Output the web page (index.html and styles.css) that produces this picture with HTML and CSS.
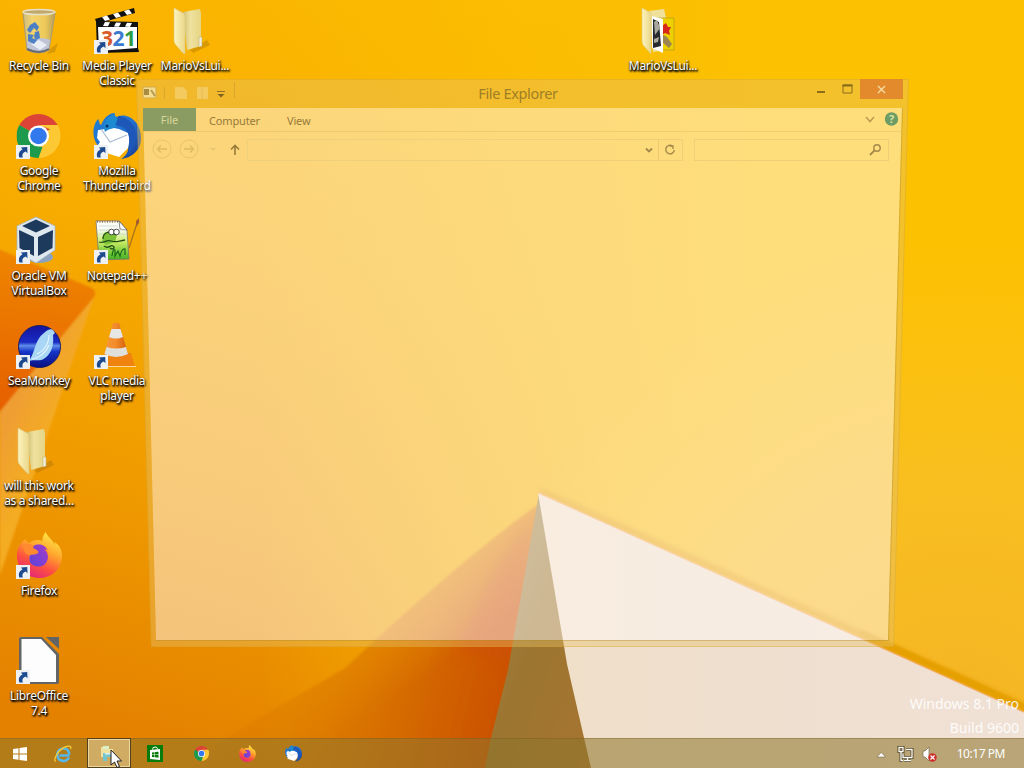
FILE: index.html
```html
<!DOCTYPE html>
<html lang="en">
<head>
<meta charset="utf-8">
<title>Desktop</title>
<link rel="stylesheet" href="styles.css">
</head>
<body>
<svg class="defs" width="0" height="0">
  <defs>
    <linearGradient id="fol" x1="0" x2="1"><stop offset="0" stop-color="#fdf3bd"/><stop offset="1" stop-color="#e9d78a"/></linearGradient>
    <linearGradient id="fol2" x1="0" x2="1"><stop offset="0" stop-color="#d0bf72"/><stop offset=".4" stop-color="#efe1a0"/><stop offset="1" stop-color="#e6d583"/></linearGradient>
    <linearGradient id="ffo" x1=".8" y1="0" x2=".3" y2="1"><stop offset="0" stop-color="#fff04a"/><stop offset=".4" stop-color="#ffa42c"/><stop offset=".7" stop-color="#ff5040"/><stop offset="1" stop-color="#e2257c"/></linearGradient>
    <linearGradient id="ffi" x1="1" y1="0" x2="0" y2="1"><stop offset="0" stop-color="#a83cc8"/><stop offset="1" stop-color="#5a42dc"/></linearGradient>
    <linearGradient id="tb" x1="0" y1="0" x2="1" y2="1"><stop offset="0" stop-color="#1c7fd4"/><stop offset=".5" stop-color="#2471cf"/><stop offset="1" stop-color="#173a92"/></linearGradient>
    <linearGradient id="sea" x1="0" y1="0" x2="0" y2="1"><stop offset="0" stop-color="#14149c"/><stop offset=".4" stop-color="#1a2cc4"/><stop offset=".48" stop-color="#5f8dea"/><stop offset=".62" stop-color="#1535c8"/><stop offset="1" stop-color="#0b0f80"/></linearGradient>
    <linearGradient id="bin" x1="0" x2="1"><stop offset="0" stop-color="#c9bd8c"/><stop offset=".3" stop-color="#f3d77a"/><stop offset=".7" stop-color="#eccb62"/><stop offset="1" stop-color="#ad9a62"/></linearGradient>
    <linearGradient id="npp" x1="0" y1="0" x2="0" y2="1"><stop offset=".2" stop-color="#fbfdf4"/><stop offset=".55" stop-color="#c5ea62"/><stop offset="1" stop-color="#3fae1e"/></linearGradient>
    <linearGradient id="vlc" x1="0" x2="1"><stop offset="0" stop-color="#f59a3c"/><stop offset=".5" stop-color="#f38a2a"/><stop offset="1" stop-color="#cf5c0a"/></linearGradient>
    <symbol id="arrow" viewBox="0 0 14 14"><path d="M0 0h14v14H0z" fill="#eef1f4"/><path d="M3.400 12.500C2 8.500 3.600 5.800 6.500 4.600L5 2.500 11.200 2l.3 6.200-1.800-1.600C6.800 7.800 5.700 9.500 6.800 12.500z" fill="#1d4a8f"/></symbol>
    <symbol id="chrome" viewBox="0 0 44 44"><path d="M22 22 2.950 11A22 22 0 0 1 41.050 11z" fill="#db4437"/><path d="M22 22 41.050 11A22 22 0 0 1 22 44z" fill="#fcc934"/><path d="M22 22V44A22 22 0 0 1 2.950 11z" fill="#1e9a4c"/><path d="M43.200 16 31.500 27.500 22 44C29 38 35 30 34 18z" fill="#fcc934"/><path d="M22 11h19.050A22 22 0 0 1 44 22L33 15z" fill="#fcc934"/><path d="M12.500 27.500 2.950 11C8 18 18 33 26 33L22 44z" fill="#1e9a4c"/><circle cx="22" cy="22" r="10.500" fill="#fff"/><circle cx="22" cy="22" r="8.300" fill="#3179ed"/></symbol>
    <symbol id="firefox" viewBox="0 0 46 46"><path d="M29 0c-2 3-3.500 6-3 9-5-2-10-1-13 2-3-1-4-3-4-4C3 11 0 17 .5 25 1 37 11 46 23 46c13 0 23-10 22.500-23C45 15 41 12 38 10c0 2 .5 3 1 5C37 8 32 6 29 0z" fill="url(#ffo)"/><path d="M6 13c4-3 9-1 11 1 3 1 5-1 8 0 4 1 7 5 7 10 0 6-4 10-10 10S12 29 13 23c-4 0-6-5-7-10z" fill="#ff8a30"/><path d="M17 14c5-3 12-1 14 4-1-.5-2-1-3-.5 6 5 4 16-5 17-7 .5-11-4-10-10 1-3 4-1 8-3 1-1 1-2 0-3-2-2-5-1-4-4.500z" fill="url(#ffi)"/></symbol>
    <symbol id="thunder" viewBox="0 0 48 46"><path d="M24 4C34-1 48 8 48 25c0 13-10 20-20 21 5-3 8-8 7-13L8 36C-1 28-2 14 5 6c2 3 1 5 3 6C12 3 17 0 22 0c-1 2 0 3 2 4z" fill="url(#tb)"/><path d="M5 17c5 0 8-2 11-3l10 2 9 4c2 6 1 12 0 15L26 44 7 38l1-4-3-2 2-3-3-4z" fill="#fff"/><path d="M8 16l9 13 17-7" fill="none" stroke="#a9bcd0" stroke-width="1.200"/><path d="M12 19c-3-8 1-15 10-18-1 2 0 3 2 3 4 3 2 9-3 11-3 1-6 1-9 4z" fill="#1e8ad2"/><path d="M25 3C36 4 44 13 43 25c-1 8-4 13-8 17 2-7 3-17-1-24-4-5-8-5-12-6 2-2 2-5 3-9z" fill="#1d58b8"/><circle cx="14" cy="13" r="1.500" fill="#0e3370"/></symbol>
    <symbol id="folder" viewBox="0 0 48 48"><path d="M19 42 36 32 39 37 22 45z" fill="#9a6b08" opacity=".35"/><path d="M12 4 29 1 30 5V38L16 42z" fill="url(#fol2)"/><path d="M28 29h3v9l-3 1z" fill="#f0efdf" stroke="#c3b475" stroke-width=".6"/><path d="M3 0 12 5Q14 6 14 9V46L12 45 4 36Q3 34 3 32z" fill="url(#fol)" stroke="#dccb82" stroke-width=".6"/></symbol>
  </defs>
</svg>

<main class="desktop">
  <svg class="wallpaper" viewBox="0 0 1024 768" preserveAspectRatio="none" aria-hidden="true">
    <defs>
      <linearGradient id="sky" gradientUnits="userSpaceOnUse" x1="480" y1="0" x2="250" y2="768"><stop offset="0" stop-color="#fbb801"/><stop offset=".35" stop-color="#f8ae00"/><stop offset=".7" stop-color="#f09b00"/><stop offset="1" stop-color="#e48200"/></linearGradient>
      <linearGradient id="right" gradientUnits="userSpaceOnUse" x1="260" y1="0" x2="760" y2="0"><stop offset="0" stop-color="#fcbf00" stop-opacity="0"/><stop offset=".75" stop-color="#fbbf02" stop-opacity=".9"/><stop offset="1" stop-color="#fcc101"/></linearGradient>
      <radialGradient id="lower" gradientUnits="userSpaceOnUse" cx="960" cy="720" r="480"><stop offset="0" stop-color="#f4b425"/><stop offset=".5" stop-color="#f8be25" stop-opacity=".85"/><stop offset="1" stop-color="#f9c020" stop-opacity="0"/></radialGradient>
      <linearGradient id="shade" gradientUnits="userSpaceOnUse" x1="300" y1="650" x2="525" y2="700"><stop offset="0" stop-color="#dc7c00" stop-opacity=".8"/><stop offset=".5" stop-color="#d56a00"/><stop offset="1" stop-color="#c84c00"/></linearGradient>
      <linearGradient id="sfade" gradientUnits="userSpaceOnUse" x1="380" y1="540" x2="460" y2="650"><stop offset="0" stop-color="#fff" stop-opacity=".08"/><stop offset="1" stop-color="#fff"/></linearGradient>
      <mask id="sm"><path d="M0 0h1024v768H0z" fill="url(#sfade)"/></mask>
      <linearGradient id="olive" x1="0" y1="0" x2="1" y2="1"><stop offset="0" stop-color="#a08b50"/><stop offset=".5" stop-color="#9c7530"/><stop offset="1" stop-color="#a77530"/></linearGradient>
      <linearGradient id="white" x1="0" y1="0" x2="1" y2="0"><stop offset="0" stop-color="#f0e0c9"/><stop offset=".4" stop-color="#efdfce"/><stop offset="1" stop-color="#f0e1d6"/></linearGradient>
      <linearGradient id="leaf" gradientUnits="userSpaceOnUse" x1="30" y1="260" x2="15" y2="410"><stop offset="0" stop-color="#ee8400"/><stop offset="1" stop-color="#e66000"/></linearGradient>
      <linearGradient id="pale" gradientUnits="userSpaceOnUse" x1="0" y1="400" x2="55" y2="425"><stop offset="0" stop-color="#ee9a38"/><stop offset="1" stop-color="#f4ac22"/></linearGradient>
      <filter id="b1"><feGaussianBlur stdDeviation="1"/></filter>
      <filter id="b2"><feGaussianBlur stdDeviation="2.500"/></filter>
      <filter id="b3" x="-50%" width="200%"><feGaussianBlur stdDeviation="8"/></filter>
    </defs>
    <path d="M0 0H1024V768H0z" fill="url(#sky)"/>
    <path d="M0 0H1024V768H0z" fill="url(#right)"/>
    <path d="M0 0H1024V768H0z" fill="url(#lower)"/>
    <path d="M95 294 0 575V400z" fill="url(#pale)" filter="url(#b1)"/>
    <path d="M-4 248 92 288Q97 291 94 297L-4 416z" fill="url(#leaf)" filter="url(#b1)"/>
    <g mask="url(#sm)"><path d="M540 503Q460 560 345 668L225 738 190 772H500z" fill="url(#shade)" filter="url(#b1)"/></g>
    <path d="M538 515 500 560 455 650 510 660z" fill="#d24a10" opacity=".4" filter="url(#b3)"/>
    <path d="M540 491 1028 709" stroke="#e49a00" stroke-width="7" opacity=".8" filter="url(#b2)"/>
    <path d="M860 633 1028 709" stroke="#e5a000" stroke-width="7" filter="url(#b1)"/>
    <path d="M539 493 570 668 594 768H485L491 738 508 670z" fill="url(#olive)"/>
    <path d="M538 493 1024 712V768H591L567 664Z" fill="url(#white)"/>
    <path d="M539 493 1024 712" stroke="#f3aa5c" stroke-width="1.500" opacity=".8"/>
  </svg>

  <section class="icons">
    <div class="item c1 r1"><svg class="pic" viewBox="0 0 48 48"><path d="M36 40 43 35 40 44 32 46z" fill="#9a6b08" opacity=".35"/><path d="M8 4 12 42Q24 48 34 42L40 4z" fill="url(#bin)" opacity=".9"/><path d="M11 34 12 42Q24 48 34 42L36 32Q24 27 11 34z" fill="#bfc5d4"/><path d="M16 36l8-4 8 5-7 5z" fill="#e9edf6"/><path d="M15 17l5-3 4 5-2 4-3-3-4 5-3-3zM13 26l6 1-2 3 5 2-3 4-6-3zM20 24l4-1 1 7-4 2-2-3z" fill="#4c80c4"/><ellipse cx="24" cy="4" rx="16" ry="2.600" fill="#c0a86a" stroke="#e8e0c8" stroke-width="1.500"/><path d="M8 5 12 42Q24 48 34 42L40 5" fill="none" stroke="#a79b76" stroke-width="1"/><path d="M12 41Q24 47 34 41" fill="none" stroke="#666b75" stroke-width="2"/></svg><span>Recycle Bin</span></div>
    <div class="item c2 r1"><svg class="pic" viewBox="0 0 48 48"><path d="M2 11 41 0 42 5 4 16z" fill="#111"/><path d="M9 9l5-1.500 3 4-5 1.500zM20 6l5-1.500 3 4-5 1.500zM31 3l5-1.500 3 4-5 1.500z" fill="#fff"/><path d="M3 13 45 14 45 40 46 44 4 45z" fill="#111"/><path d="M12 14l5 .2-2 4-5-.3zM23 14.500l5 .2-2 4-5-.3zM34 14.700l5 .2-2 4-5-.3z" fill="#fff"/><path d="M5 19 44 19 44 40 6 43z" fill="#fff"/><text x="8" y="38" class="n321"><tspan fill="#d95a2b">3</tspan><tspan fill="#3a7bd0">2</tspan><tspan fill="#2b9c40">1</tspan></text><use href="#arrow" x="1" y="32" width="14" height="14"/></svg><span>Media Player<br>Classic</span></div>
    <div class="item c3 r1"><svg class="pic"><use href="#folder"/></svg><span>MarioVsLui...</span></div>
    <div class="item c9 r1"><svg class="pic" viewBox="0 0 48 48"><path d="M10 3 25 1 27 10V42L14 44z" fill="#efe09a"/><path d="M18 10 35 10V42L22 42z" fill="#ecd000" stroke="#a89022" stroke-width=".6"/><path d="M23 18l4-3 2 4 3 0-2 4 1 4-5-2-3 2z" fill="#d8281e"/><path d="M24 27l4 2 5 7-3 4-7-6z" fill="#9b8550"/><path d="M13 8 24 11V45L13 40z" fill="#fff"/><path d="M14 11 20 14 22 38 14 40z" fill="#292a2e"/><path d="M15 14l3-2 3 8-5 7zM15 31l5-2-1 5-4 1z" fill="#aaa79f"/><path d="M3 0 12 5V46L4 37Q3 34 3 32z" fill="url(#fol)" stroke="#dccb82" stroke-width=".6"/></svg><span>MarioVsLui...</span></div>
    <div class="item c1 r2"><svg class="pic" viewBox="0 0 48 48"><use href="#chrome" x="1.500" y="1" width="44" height="44"/><use href="#arrow" x="1" y="32" width="14" height="14"/></svg><span>Google<br>Chrome</span></div>
    <div class="item c2 r2"><svg class="pic" viewBox="0 0 48 48"><use href="#thunder" x="0" y="0" width="48" height="46"/><use href="#arrow" x="1" y="32" width="14" height="14"/></svg><span>Mozilla<br>Thunderbird</span></div>
    <div class="item c1 r3"><svg class="pic" viewBox="0 0 48 48"><ellipse cx="25" cy="39" rx="13" ry="6" fill="#8ba3bd"/><path d="M21-1 40 8V32L21 45 2 34V8z" fill="#dfe7ef" stroke="#9fb2c4" stroke-width=".7"/><path d="M21 1.500 35 8 21 14.500 7 8zM4 12 19 19V38L4.500 30zM38 12 23 19V38L37.500 30z" fill="#1d395c"/><use href="#arrow" x="1" y="32" width="14" height="14"/></svg><span>Oracle VM<br>VirtualBox</span></div>
    <div class="item c2 r3"><svg class="pic" viewBox="0 0 48 48"><path d="M3 3 26 3 34 12 36 41 6 42z" fill="url(#npp)" stroke="#777" stroke-width=".8"/><path d="M26 3 27 11 34 12z" fill="#fff" stroke="#555" stroke-width=".7"/><path d="M4 3.500h21" stroke="#9b7a62" stroke-width="2.500" stroke-dasharray="1 1.500"/><path d="M6 8h19M6 12h27M6 16h28" stroke="#c8d3dc" stroke-width=".8"/><path d="M10 20C9 13 17 11 24 17L22 24 13 27 9 23z" fill="#7cc238"/><path d="M10 21c0-7 7-9 13-4M6 24c6 2 7-3 12-1s7 0 14-1M11 28c5 4 6-2 9 0s-1 4-3 2" fill="none" stroke="#234d18" stroke-width="1.300"/><circle cx="18.500" cy="14" r="2.800" fill="#fff" stroke="#222" stroke-width=".8"/><circle cx="23.500" cy="14" r="2.800" fill="#fff" stroke="#222" stroke-width=".8"/><path d="M19 38q1-8 3-6v6l3-5 2 5q2-8 5-7v6" fill="none" stroke="#17681a" stroke-width="1.200"/><path d="M45 2 36 30" stroke="#a5741c" stroke-width="1.200"/><path d="M43 3l3-3 0 5-3 4z" fill="#a05f2c"/><use href="#arrow" x="1" y="32" width="14" height="14"/></svg><span>Notepad++</span></div>
    <div class="item c1 r4"><svg class="pic" viewBox="0 0 48 48"><circle cx="24.500" cy="23.500" r="21" fill="url(#sea)" stroke="#1a1c60"/><path d="M13 38C20 33 19 17 29 10c3-3 7-5 9-3l2 3-2 2c1 9-1 18-8 23-5 4-10 1-17 3z" fill="#a9d6f5"/><path d="M22 31c7-3 12-10 12-19M17 36c8-1 15-8 17-14" fill="none" stroke="#e2f3fd" stroke-width="1.200"/><use href="#arrow" x="1" y="32" width="14" height="14"/></svg><span>SeaMonkey</span></div>
    <div class="item c2 r4"><svg class="pic" viewBox="0 0 48 48"><path d="M12 30H38L42 44H8z" fill="#f0820f"/><path d="M8 43.500H43" stroke="#ffd79a" stroke-width="1"/><path d="M20 0h6l9 31Q23 37 11 31z" fill="url(#vlc)"/><path d="M18.500 6H27.500l2.500 8Q23 17 16 14z" fill="#e6e6e3"/><path d="M13.500 24Q23 27 33 24L35 31Q23 37 11.500 31z" fill="#dfdfdb"/><use href="#arrow" x="1" y="32" width="14" height="14"/></svg><span>VLC media<br>player</span></div>
    <div class="item c1 r5"><svg class="pic"><use href="#folder"/></svg><span>will this work<br>as a shared...</span></div>
    <div class="item c1 r6"><svg class="pic" viewBox="0 0 48 48"><use href="#firefox" x="1.500" y="-1" width="46" height="46"/><use href="#arrow" x="1" y="32" width="14" height="14"/></svg><span>Firefox</span></div>
    <div class="item c1 r7"><svg class="pic" viewBox="0 0 48 48"><path d="M4 1Q4-1 6-1H27L44 16V44Q44 46 42 46H6Q4 46 4 44z" fill="#626466"/><path d="M6.500 1H26L41 17V44H6.500z" fill="#fdfdfd"/><path d="M31-1H44V11z" fill="#626466"/><use href="#arrow" x="1" y="32" width="14" height="14"/></svg><span>LibreOffice<br>7.4</span></div>
  </section>

  <section class="window">
    <svg class="frame" viewBox="0 0 773 569" aria-hidden="true">
      <path d="M0 0H773L758 568H15zM7 29 20 561H752L766 29z" fill="#e6c26a" fill-opacity=".42" fill-rule="evenodd"/>
      <path d="M7 29H766L752 561H20z" fill="#fffaf5" fill-opacity=".5"/>
      <path d="M.5.500H772.500L757.500 567.500H15.500z" fill="none" stroke="#d09c18" stroke-opacity=".3"/>
      <path d="M20 561.500H752.500L766.500 29" fill="none" stroke="#a78a30" stroke-opacity=".38"/>
    </svg>
    <header class="titlebar">
      <svg class="quick" width="102" height="24" viewBox="0 0 102 24"><path d="M7 8h13v11H7z" fill="#f3dc8e" stroke="#d5ac48"/><path d="M8 10h5v6H8z" fill="#a98c43"/><path d="M15 11l4 6" stroke="#b89a55" stroke-width="2"/><path d="M28.500 8v12M98.500 3v16" stroke="#c99d30" opacity=".6"/><path d="M39 8h8l4 4v8H39zM61 8h11v12H61z" fill="#f7dc92" opacity=".5"/><path d="M66 8v12" stroke="#e2bb5d"/><path d="M81 12.500h8" stroke="#8f7028"/><path d="M81.500 15h7L85 18.500z" fill="#806522"/></svg>
      <h1>File Explorer</h1>
      <div class="controls">
        <svg width="43" height="19" viewBox="0 0 43 19"><path d="M0 13h8" stroke="#8b6d1a" stroke-width="2"/><path d="M26 6h9v8h-9z" fill="none" stroke="#8b6d1a"/><path d="M25.500 6.500h10" stroke="#8b6d1a" stroke-width="2"/></svg>
        <button class="close"><svg width="9" height="9" viewBox="0 0 9 9"><path d="M1 1l7 7M8 1 1 8" stroke="#f5dca5" stroke-width="1.400"/></svg></button>
      </div>
    </header>
    <nav class="ribbon">
      <span class="file">File</span><span class="tab comp">Computer</span><span class="tab">View</span>
      <svg class="tools" width="40" height="18" viewBox="0 0 40 18"><path d="M4 6l4 4.500 4-4.500" fill="none" stroke="#bb9d50" stroke-width="1.500"/><circle cx="29.500" cy="8" r="6.700" fill="#6d9c65"/><text x="29.500" y="12" text-anchor="middle" class="q">?</text></svg>
    </nav>
    <div class="navrow">
      <svg class="arrows" width="98" height="22" viewBox="0 0 98 22"><g fill="none" stroke="#e8c468" stroke-width="1"><circle cx="13" cy="10" r="9"/><circle cx="40" cy="10" r="9"/></g><path d="M18 10H8.500M12 6.500l-3.500 3.500 3.500 3.500M35 10h9.500M41 6.500l3.500 3.500-3.500 3.500" fill="none" stroke="#dfbb62" stroke-width="1.300"/><path d="M61 9h6l-3 2.500z" fill="#e5c473"/><path d="M86 16V6M82 10.500l4-4 4 4" fill="none" stroke="#977c39" stroke-width="1.600"/></svg>
      <div class="address"><svg width="38" height="20" viewBox="0 0 38 20"><path d="M2 8.500 5 11.500 8 8.500" fill="none" stroke="#a4884a" stroke-width="1.800"/><path d="M14.500 0v20" stroke="#ecca72"/><path d="M28.500 6A4.300 4.300 0 1 0 30.300 10M25.500 6h3.500v3" fill="none" stroke="#a4884a" stroke-width="1.400"/></svg></div>
      <div class="search"><svg width="14" height="14" viewBox="0 0 14 14"><circle cx="9" cy="5" r="3.200" fill="none" stroke="#a4884a" stroke-width="1.400"/><path d="M6.700 7.200 2 12" stroke="#a4884a" stroke-width="1.800"/></svg></div>
    </div>
  </section>

  <div class="watermark">Windows 8.1 Pro<br>Build 9600</div>
</main>

<footer class="taskbar">
  <div class="start"><svg width="14" height="14" viewBox="0 0 14 14"><path d="M0 2 5.500 1.200V6.500H0zM6.500 1 14 0V6.500H6.500zM0 7.500H5.500V12.800L0 12zM6.500 7.500H14V14L6.500 13z" fill="#fff"/></svg></div>
  <div class="task"><svg width="18" height="18" viewBox="0 0 18 18"><path d="M15.500 10.500H5.500M15.200 9.500C15 5.500 12.500 3.500 9.500 3.500A6.200 6.200 0 1 0 15 12.500" fill="none" stroke="#55b8ec" stroke-width="2.700"/><path d="M1.500 16.500C-1 14 5 3.500 12.500 1.500 16 .5 17.500 1.500 16.500 4" fill="none" stroke="#f3c936" stroke-width="1.400"/></svg></div>
  <div class="task active"><svg width="20" height="18" viewBox="0 0 20 18"><path d="M2 3h6l1 2h5v8H2z" fill="#f1e2a0"/><path d="M4 2h6v3H4z" fill="#d9efc8"/><path d="M4 9h12v7h-3v-3H8v4H4z" fill="#75c5ce"/><path d="M6 9h9v1.500H6z" fill="#d7f0ed"/></svg></div>
  <div class="task"><svg width="16" height="17" viewBox="0 0 16 17"><path d="M0 0h16v17H0z" fill="#087c0b"/><path d="M3 5l10-1v11L3 14z" fill="#fff"/><path d="M5.500 4.500q0-2.500 2.500-2.500t2.500 2" fill="none" stroke="#fff"/><path d="M5 7.500l2.500-.3v2.100H5zM8 7.100l3.500-.4v2.600H8zM5 9.800h2.500v2.400L5 12zM8 9.800h3.500v2.900L8 12.300z" fill="#087c0b"/></svg></div>
  <div class="task"><svg width="15" height="15"><use href="#chrome"/></svg></div>
  <div class="task"><svg width="17" height="17"><use href="#firefox"/></svg></div>
  <div class="task"><svg width="17" height="17"><use href="#thunder"/></svg></div>
  <div class="tray">
    <svg width="64" height="20" viewBox="0 0 64 20"><path d="M4 13h8.500L8.200 8.500z" fill="#fff" stroke="#6a5a3a" stroke-width=".5"/><g fill="none" stroke="#51431f" stroke-width="3"><path d="M33 5.500h6v8h-9v-4M31 16.500h7M26 3.500h4v4h-4zM28 8v8.500h2"/></g><g fill="none" stroke="#fff" stroke-width="1.300"><path d="M33 5.500h6v8h-9v-4M31 16.500h7M26 3.500h4v4h-4zM28 8v8.500h2M34.500 14v2"/></g><path d="M50 7h2l4-4v14l-4-4h-2z" fill="#fff" stroke="#7a6a4a" stroke-width=".7"/><circle cx="59.500" cy="13.500" r="4.200" fill="#cf2e2a"/><path d="M57.500 11.500l4 4M61.500 11.500l-4 4" stroke="#fff" stroke-width="1.200"/></svg>
    <time>10:17 PM</time>
  </div>
</footer>
<svg class="cursor" width="13" height="20" viewBox="0 0 13 20"><path d="M1 1V16L4.500 13 7 18.500 9.500 17.500 7 12H11.500z" fill="#fff" stroke="#222" stroke-width="1"/></svg>
</body>
</html>
```
FILE: styles.css
```css
* { box-sizing: border-box; }
body {
  margin: 0;
  width: 1024px;
  height: 768px;
  overflow: hidden;
  position: relative;
  font: 12px/15px "Noto Sans", "Open Sans", sans-serif;
}
svg { display: block; flex: none; }
.defs { position: absolute; }
.desktop { position: relative; height: 768px; }
.wallpaper { position: absolute; inset: 0; width: 100%; height: 100%; }

.icons {
  position: relative;
  display: grid;
  grid-template-columns: repeat(13, 78px);
  grid-template-rows: repeat(7, 105px);
}
.item {
  display: flex;
  flex-direction: column;
  align-items: center;
  gap: 2px;
  padding-top: 8px;
  color: #fff;
  text-align: center;
  white-space: nowrap;
  letter-spacing: -0.3px;
  text-shadow: 1px 1px 2px #000, 0 1px 2px #000, 1px 2px 2px rgba(0, 0, 0, .8);
}
.pic { width: 48px; height: 48px; overflow: visible; }
.n321 { font: bold 21px "Open Sans", sans-serif; letter-spacing: -0.5px; text-shadow: none; }
.c1 { grid-column: 1; }
.c2 { grid-column: 2; }
.c3 { grid-column: 3; }
.c9 { grid-column: 9; }
.r1 { grid-row: 1; }
.r2 { grid-row: 2; }
.r3 { grid-row: 3; }
.r4 { grid-row: 4; }
.r5 { grid-row: 5; }
.r6 { grid-row: 6; }
.r7 { grid-row: 7; }

.window {
  position: absolute;
  left: 136px;
  top: 79px;
  width: 773px;
  height: 569px;
  color: #957a3a;
}
.frame { position: absolute; inset: 0; width: 773px; height: 569px; }
.titlebar {
  position: relative;
  height: 29px;
  display: grid;
  grid-template-columns: 1fr auto 1fr;
}
.titlebar h1 {
  margin: 0 0 0 -9px;
  font-size: 14.5px;
  font-weight: 400;
  line-height: 29px;
  letter-spacing: -0.35px;
  color: #a07f25;
}
.controls { display: flex; justify-content: flex-end; padding-right: 6px; }
.close {
  width: 43px;
  height: 20px;
  border: 0;
  padding: 0;
  display: flex;
  align-items: center;
  justify-content: center;
  background: #e28a2c;
}
.ribbon {
  position: relative;
  display: flex;
  align-items: center;
  height: 24px;
  margin: 0 7px;
  border-bottom: 1px solid rgba(220, 180, 80, .35);
  font-size: 11px;
}
.file {
  width: 53px;
  height: 23px;
  line-height: 23px;
  text-align: center;
  background: #8b9c62;
  color: #d8d69a;
}
.tab { padding: 2px 0 0 27px; letter-spacing: -0.15px; }
.tab.comp { padding-left: 13px; }
.tools { margin-left: auto; }
.q { font: bold 11px "Open Sans", sans-serif; fill: #d9e2a4; }
.navrow {
  position: relative;
  display: flex;
  align-items: center;
  height: 22px;
  margin: 7px 20px 0 13px;
}
.address {
  display: flex;
  justify-content: flex-end;
  width: 437px;
  height: 22px;
  border: 1px solid #f0cf7a;
}
.search {
  display: flex;
  justify-content: flex-end;
  align-items: center;
  width: 196px;
  height: 22px;
  margin-left: 11px;
  padding-right: 6px;
  border: 1px solid #f0cf7a;
}
.watermark {
  position: absolute;
  right: 5px;
  bottom: 28px;
  color: rgba(255, 255, 255, .9);
  font-size: 14px;
  line-height: 24px;
  text-align: right;
}
.taskbar {
  position: absolute;
  left: 0;
  right: 0;
  bottom: 0;
  height: 30px;
  display: flex;
  background: rgba(142, 118, 45, .56);
  border-top: 1px solid rgba(120, 85, 30, .35);
}
.start { width: 39px; display: flex; align-items: center; justify-content: center; }
.task { width: 46px; display: flex; align-items: center; justify-content: center; }
.start + .task { margin-left: 1px; }
.task.active {
  width: 44px;
  margin: -1px 1px 0;
  background: rgba(230, 212, 160, .55);
  border: 1px solid #54401c;
  box-shadow: inset 0 0 0 1px rgba(255, 245, 200, .6);
}
.tray {
  margin-left: auto;
  padding-right: 19px;
  display: flex;
  align-items: center;
  gap: 20px;
  color: #fff;
  letter-spacing: -0.45px;
}
.cursor { position: absolute; left: 110px; top: 749px; }
```
